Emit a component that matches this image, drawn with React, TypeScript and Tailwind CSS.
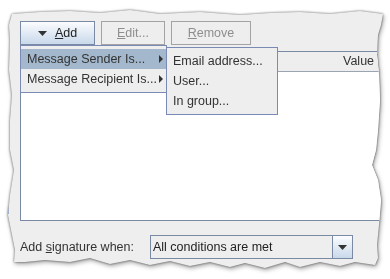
import { ReactNode } from "react"

function Tri({ className = "" }: { className?: string }) {
  return (
    <svg width="9" height="5" viewBox="0 0 9 5" className={className}>
      <path d="M0 0H9L4.5 5Z" fill="#333" />
    </svg>
  )
}

function RightTri() {
  return (
    <svg width="4" height="8" viewBox="0 0 4 8">
      <path d="M0 0L4 4L0 8Z" fill="#333" />
    </svg>
  )
}

function MenuItem({ label, active = false }: { label: string; active?: boolean }) {
  return (
    <div className={`h-5 flex items-center justify-between pl-[6px] pr-[3px] ${active ? "bg-[#a3b8cc]" : ""}`}>
      <span>{label}</span>
      <RightTri />
    </div>
  )
}

function SubItem({ children }: { children: ReactNode }) {
  return <div className="h-5 flex items-center pl-[6px]">{children}</div>
}

export default function App() {
  return (
    <div className="w-[390px] h-[279px] bg-white overflow-hidden font-['Liberation_Sans',Arial,sans-serif] text-[12.5px] text-[#333333]">
      <div className="w-full h-full [filter:drop-shadow(0_0_1px_rgba(0,0,0,0.55))_drop-shadow(1px_2px_2px_rgba(0,0,0,0.35))]">
        <div className="relative w-full h-full bg-[#eeeeee] pt-[21px] pl-[20px] [clip-path:polygon(12px_14px,40px_12px,70px_11px,100px_13px,130px_10px,160px_14px,200px_12px,240px_15px,270px_13px,300px_12px,330px_14px,360px_11px,383px_14px,381px_25px,378px_35px,377px_55px,379px_75px,380px_100px,378px_130px,376px_150px,372px_165px,378px_180px,381px_200px,379px_225px,377px_245px,378px_258px,375px_265px,355px_262px,340px_266px,320px_262px,300px_267px,285px_262px,265px_268px,245px_263px,230px_267px,210px_262px,190px_266px,170px_261px,150px_265px,130px_260px,110px_264px,90px_258px,70px_262px,45px_260px,25px_262px,14px_262px,15px_250px,12px_235px,8px_215px,10px_195px,14px_170px,10px_150px,10px_120px,12px_95px,9px_70px,10px_40px,9px_25px)]">
          {/* toolbar */}
          <div className="flex gap-[6px] h-[24px]">
            <div className="w-[75px] flex items-center justify-center gap-[8px] border border-[#7a8aa5] bg-gradient-to-b from-[#fbfcfe] to-[#c9d9eb] text-[#222]">
              <Tri />
              <span><span className="underline">A</span>dd</span>
            </div>
            <div className="w-[64px] flex items-center justify-center border border-[#a3a3a3] text-[#8e8e8e]">
              <span><span className="underline">E</span>dit...</span>
            </div>
            <div className="w-[80px] flex items-center justify-center border border-[#a3a3a3] text-[#8e8e8e]">
              <span><span className="underline">R</span>emove</span>
            </div>
          </div>

          {/* table */}
          <div className="mt-[6px] w-[365px] h-[170px] border border-[#7a8aa5] bg-white flex flex-col">
            <div className="h-[20px] bg-[#eeeeee] border-b border-[#9aa4b2] flex items-center pl-[322px]">Value</div>
          </div>

          {/* footer */}
          <div className="mt-[14px] flex items-center h-[24px]">
            <span className="w-[130px]">Add <span className="underline">s</span>ignature when:</span>
            <div className="w-[203px] h-[24px] flex border border-[#7a8aa5]">
              <div className="flex-1 flex items-center pl-[2px] text-[#222]">All conditions are met</div>
              <div className="w-[20px] border-l border-[#7a8aa5] bg-gradient-to-b from-[#fbfcfe] to-[#c9d9eb] flex items-center justify-center">
                <Tri />
              </div>
            </div>
          </div>

          {/* popup menu */}
          <div className="absolute left-[20px] top-[45px] w-[147px] border border-[#7a8ab5] bg-[#eeeeee] py-[3px]">
            <MenuItem label="Message Sender Is..." active />
            <MenuItem label="Message Recipient Is..." />
          </div>

          {/* submenu */}
          <div className="absolute left-[166px] top-[47px] w-[112px] border border-[#7a8ab5] bg-[#eeeeee] py-[3px]">
            <SubItem>Email address...</SubItem>
            <SubItem>User...</SubItem>
            <SubItem>In group...</SubItem>
          </div>

          <div className="absolute left-[7px] top-[187px] w-[2px] h-[27px] bg-[#8fa3c8]" />
        </div>
      </div>
    </div>
  )
}
